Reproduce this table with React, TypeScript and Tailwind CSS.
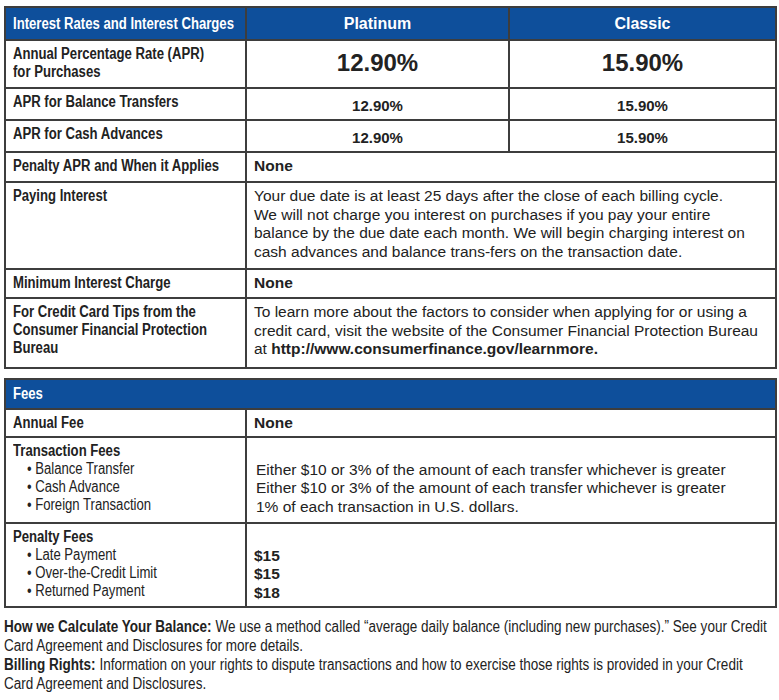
const arial = "font-['Liberation_Sans',Arial,sans-serif]";
// condensed look: Arial squeezed horizontally
const squeeze = "origin-left scale-x-[0.82] whitespace-nowrap";

const cell = "border-2 border-[#3d3d3d] align-top";
const label = `${cell} ${arial} font-bold text-[16px] leading-[18px] text-[#222] pl-[7px] pt-[4px] w-[241px]`;
const body = `${cell} ${arial} text-[15.5px] leading-[18.7px] text-[#222] pl-[7px] pt-[4px]`;
const head = `border-2 border-[#3d3d3d] bg-[#0e4f9b] text-white`;

function Line({ children }: { children: React.ReactNode }) {
  return <div className={squeeze}>{children}</div>;
}

function NoteLine({ children }: { children: React.ReactNode }) {
  return <div className="origin-left scale-x-[0.845] whitespace-nowrap">{children}</div>;
}

function RateRow({ name, a, b, big }: { name: React.ReactNode; a: string; b: string; big?: boolean }) {
  const size = big ? "text-[24px] pt-[4px]" : "text-[15px] pt-[6px]";
  return (
    <tr className={big ? "h-[48px]" : "h-[32px]"}>
      <td className={label}>{name}</td>
      <td className={`${cell} ${arial} font-bold text-center text-[#222] ${size}`}>{a}</td>
      <td className={`${cell} ${arial} font-bold text-center text-[#222] ${size}`}>{b}</td>
    </tr>
  );
}

function Bullet({ children }: { children: React.ReactNode }) {
  return <div className={`${squeeze} pl-[17px] font-normal`}>• {children}</div>;
}

export default function App() {
  return (
    <div className="bg-white w-[779px] h-[700px] overflow-hidden pt-[6px] pl-[4px] text-[#222]">
      {/* Interest rates */}
      <table className="border-collapse w-[773px] table-fixed">
        <colgroup>
          <col className="w-[241px]" />
          <col className="w-[263px]" />
          <col />
        </colgroup>
        <tbody>
          <tr className="h-[33px]">
            <td className={`${head} ${arial} font-bold text-[16px] pl-[7px] align-middle`}>
              <Line>Interest Rates and Interest Charges</Line>
            </td>
            <td className={`${head} ${arial} font-bold text-[16px] text-center align-middle`}>Platinum</td>
            <td className={`${head} ${arial} font-bold text-[16px] text-center align-middle`}>Classic</td>
          </tr>
          <RateRow
            big
            name={
              <>
                <Line>Annual Percentage Rate (APR)</Line>
                <Line>for Purchases</Line>
              </>
            }
            a="12.90%"
            b="15.90%"
          />
          <RateRow name={<Line>APR for Balance Transfers</Line>} a="12.90%" b="15.90%" />
          <RateRow name={<Line>APR for Cash Advances</Line>} a="12.90%" b="15.90%" />
          <tr className="h-[30px]">
            <td className={label}>
              <Line>Penalty APR and When it Applies</Line>
            </td>
            <td colSpan={2} className={`${body} font-bold`}>None</td>
          </tr>
          <tr className="h-[87px]">
            <td className={label}>
              <Line>Paying Interest</Line>
            </td>
            <td colSpan={2} className={body}>
              Your due date is at least 25 days after the close of each billing cycle.<br />
              We will not charge you interest on purchases if you pay your entire<br />
              balance by the due date each month. We will begin charging interest on<br />
              cash advances and balance trans-fers on the transaction date.
            </td>
          </tr>
          <tr className="h-[29px]">
            <td className={label}>
              <Line>Minimum Interest Charge</Line>
            </td>
            <td colSpan={2} className={`${body} font-bold`}>None</td>
          </tr>
          <tr className="h-[70px]">
            <td className={label}>
              <Line>For Credit Card Tips from the</Line>
              <Line>Consumer Financial Protection</Line>
              <Line>Bureau</Line>
            </td>
            <td colSpan={2} className={body}>
              To learn more about the factors to consider when applying for or using a<br />
              credit card, visit the website of the Consumer Financial Protection Bureau<br />
              at <span className="font-bold">http://www.consumerfinance.gov/learnmore.</span>
            </td>
          </tr>
        </tbody>
      </table>

      {/* Fees */}
      <table className="border-collapse w-[773px] table-fixed mt-[9px]">
        <colgroup>
          <col className="w-[241px]" />
          <col />
        </colgroup>
        <tbody>
          <tr className="h-[30px]">
            <td colSpan={2} className={`${head} ${arial} font-bold text-[16px] pl-[7px] align-middle`}>
              <Line>Fees</Line>
            </td>
          </tr>
          <tr className="h-[28px]">
            <td className={label}>
              <Line>Annual Fee</Line>
            </td>
            <td className={`${body} font-bold`}>None</td>
          </tr>
          <tr className="h-[86px]">
            <td className={`${label} leading-[18.7px]`}>
              <Line>Transaction Fees</Line>
              <Bullet>Balance Transfer</Bullet>
              <Bullet>Cash Advance</Bullet>
              <Bullet>Foreign Transaction</Bullet>
            </td>
            <td className={`${body} pl-[9px]`}>
              <div className="h-[18.7px]" />
              <div>Either $10 or 3% of the amount of each transfer whichever is greater</div>
              <div>Either $10 or 3% of the amount of each transfer whichever is greater</div>
              <div>1% of each transaction in U.S. dollars.</div>
            </td>
          </tr>
          <tr className="h-[84px]">
            <td className={`${label} leading-[18.7px] pt-[3px]`}>
              <Line>Penalty Fees</Line>
              <Bullet>Late Payment</Bullet>
              <Bullet>Over-the-Credit Limit</Bullet>
              <Bullet>Returned Payment</Bullet>
            </td>
            <td className={`${body} font-bold pt-[3px]`}>
              <div className="h-[18.7px]" />
              <div>$15</div>
              <div>$15</div>
              <div>$18</div>
            </td>
          </tr>
        </tbody>
      </table>

      {/* Notes */}
      <div className={`${arial} text-[16px] leading-[19px] text-[#222] mt-[9px]`}>
        <NoteLine>
          <span className="font-bold">How we Calculate Your Balance:</span> We use a method called “average daily balance (including new purchases).” See your Credit
        </NoteLine>
        <NoteLine>Card Agreement and Disclosures for more details.</NoteLine>
        <NoteLine>
          <span className="font-bold">Billing Rights:</span> Information on your rights to dispute transactions and how to exercise those rights is provided in your Credit
        </NoteLine>
        <NoteLine>Card Agreement and Disclosures.</NoteLine>
      </div>
    </div>
  );
}
